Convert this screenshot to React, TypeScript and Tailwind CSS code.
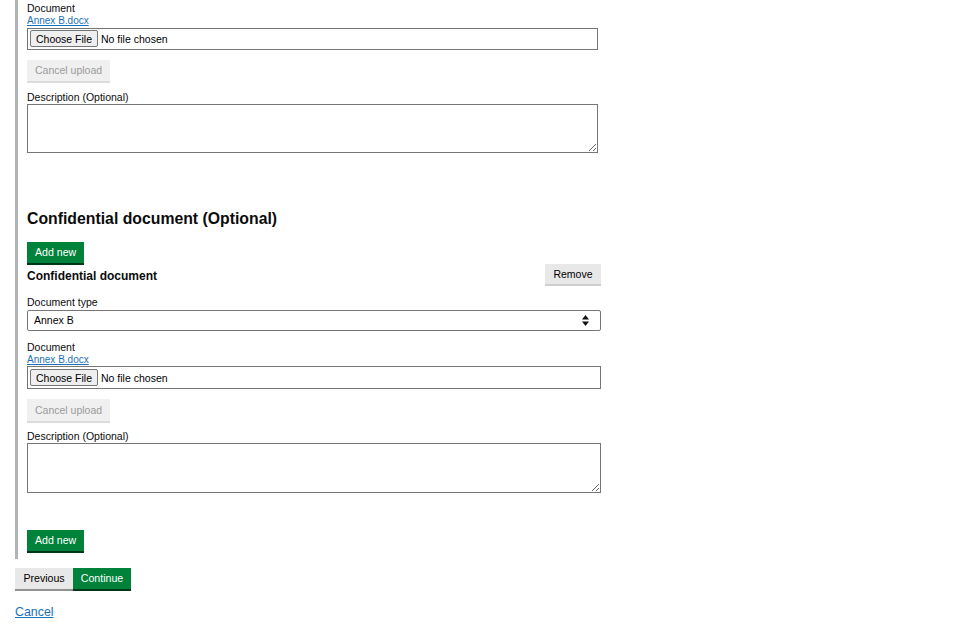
import { useState } from 'react';

const FONT = "font-['Liberation_Sans',Arial,sans-serif]";

const GreenButton = ({ label, className = '' }: { label: string; className?: string }) => (
  <button className={`h-[21px] px-[8px] bg-[#00823b] text-white text-[10.6px] leading-[21px] shadow-[0_2px_0_#003618] ${className}`}>
    {label}
  </button>
);

const FileField = ({ width }: { width: string }) => (
  <div className={`${width} border border-[#767676] flex items-center px-[2px]`}>
    <input
      type="file"
      className="text-[10.5px] leading-[17px] text-black file:h-[17px] file:px-[5px] file:mr-[3px] file:border file:border-[#767676] file:bg-[#efefef] file:rounded-[2px] file:text-black"
    />
  </div>
);

const CancelUpload = ({ className = '' }: { className?: string }) => (
  <button disabled className={`h-[21px] px-[8px] bg-[#f0f0f0] text-[#9a9a9a] text-[10.5px] leading-[21px] shadow-[0_2px_0_#dcdcdc] ${className}`}>
    Cancel upload
  </button>
);

const App = () => {
  const [docType, setDocType] = useState('Annex B');

  return (
    <div className={`${FONT} text-[10.5px] text-[#0b0c0c] bg-white w-[960px] h-[640px] pl-[15px]`}>
      <div className="border-l-[3px] border-[#b1b4b6] pl-[9px] pb-[8px]">
        {/* Previous document entry */}
        <div className="w-[571px] flex flex-col items-start">
          <label className="pt-[2px] leading-[13px]">Document</label>
          <a href="#" className="text-[10px] leading-[12px] text-[#1d70b8] underline">Annex B.docx</a>
          <div className="mt-px h-[22px] w-full flex">
            <FileField width="w-full" />
          </div>
          <CancelUpload className="mt-[10px]" />
          <label className="mt-[9px] leading-[14px]">Description (Optional)</label>
          <textarea className="w-full h-[49px] border border-[#767676] block" />
        </div>

        {/* Confidential documents */}
        <h2 className="mt-[56px] text-[15.8px] leading-[20px] font-bold">Confidential document (Optional)</h2>
        <GreenButton label="Add new" className="mt-[13px]" />

        <div className="w-[574px] flex flex-col items-start">
          <div className="w-full h-[22px] flex items-center justify-between">
            <span className="pt-[3px] font-bold text-[12px] leading-[14px]">Confidential document</span>
            <button className="h-[20px] w-[56px] bg-[#e8e8e8] text-black text-[10.5px] leading-[20px] shadow-[0_2px_0_#cfcfcf]">
              Remove
            </button>
          </div>

          <label className="mt-[10px] leading-[14px]">Document type</label>
          <div className="relative mt-px w-full">
            <select
              value={docType}
              onChange={(e) => setDocType(e.target.value)}
              className="appearance-none w-full h-[21px] border border-[#767676] rounded-[2px] pl-[6px] text-[10.5px] leading-[19px] text-black bg-white"
            >
              <option>Annex A</option>
              <option>Annex B</option>
              <option>Annex C</option>
            </select>
            <svg className="absolute right-[12px] top-[5px] pointer-events-none" width="7" height="11" viewBox="0 0 7 11">
              <path d="M3.5 0 L7 4.5 H0 Z" fill="#111" />
              <path d="M3.5 11 L7 6.5 H0 Z" fill="#111" />
            </svg>
          </div>

          <label className="mt-[10px] leading-[13px]">Document</label>
          <a href="#" className="text-[10px] leading-[12px] text-[#1d70b8] underline">Annex B.docx</a>
          <div className="h-[23px] w-full flex">
            <FileField width="w-full" />
          </div>
          <CancelUpload className="mt-[10px] h-[22px]" />
          <label className="mt-[8px] leading-[14px]">Description (Optional)</label>
          <textarea className="w-full h-[50px] border border-[#767676] block" />
        </div>

        <GreenButton label="Add new" className="mt-[37px]" />
      </div>

      <div className="mt-[9px] flex">
        <button className="h-[21px] w-[58px] bg-[#e8e8e8] text-black text-[10.6px] leading-[21px] shadow-[0_2px_0_#929191]">
          Previous
        </button>
        <button className="h-[21px] w-[58px] bg-[#00823b] text-white text-[10.6px] leading-[21px] shadow-[0_2px_0_#003618]">
          Continue
        </button>
      </div>

      <a href="#" className="inline-block mt-[16px] text-[12.4px] leading-[15px] text-[#1d70b8] underline">
        Cancel
      </a>
    </div>
  );
};

export default App;
